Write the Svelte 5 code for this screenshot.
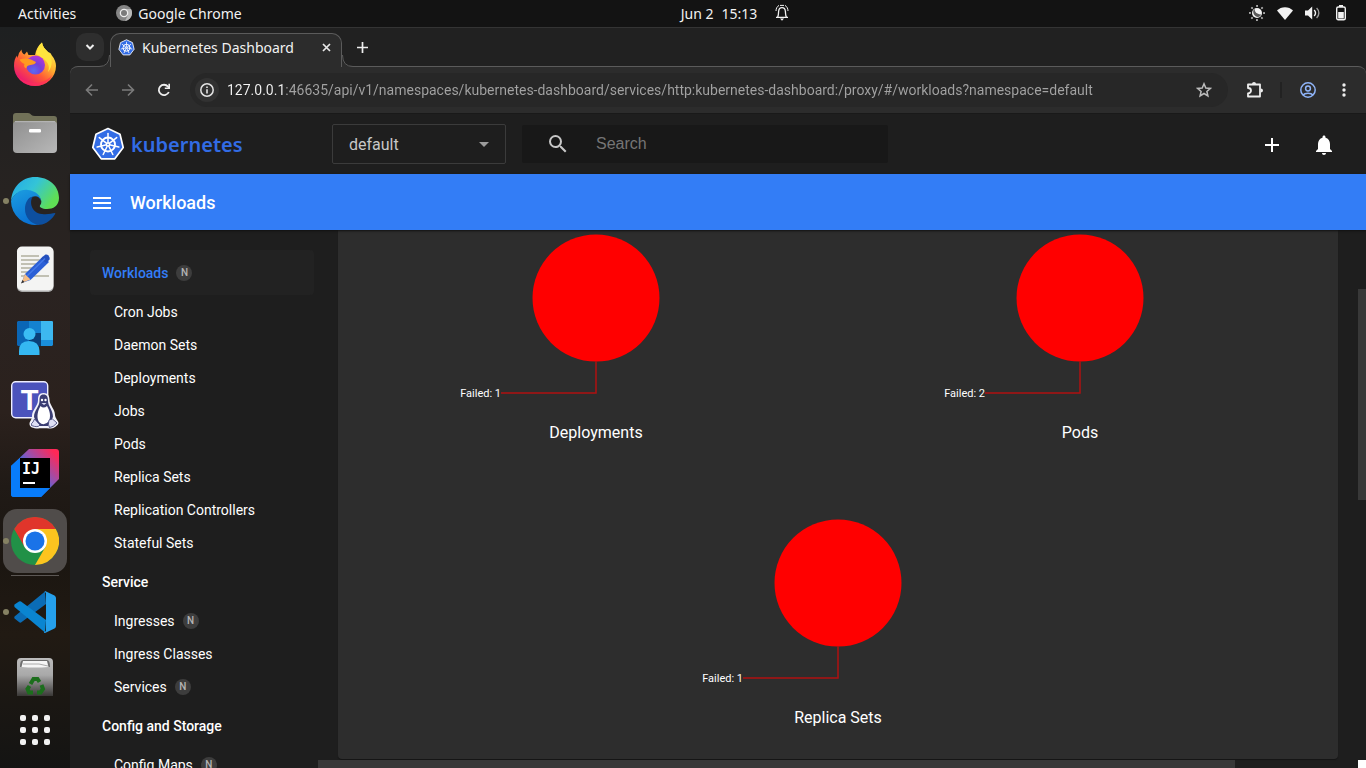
<script>
  const workloads = ['Cron Jobs', 'Daemon Sets', 'Deployments', 'Jobs', 'Pods', 'Replica Sets', 'Replication Controllers', 'Stateful Sets'];
  const sections = [
    { title: 'Workloads', active: true, badge: true, items: workloads.map((name) => ({ name })) },
    { title: 'Service', items: [{ name: 'Ingresses', badge: true }, { name: 'Ingress Classes' }, { name: 'Services', badge: true }] },
    { title: 'Config and Storage', items: [{ name: 'Config Maps', badge: true }] }
  ];
  const charts = [
    { name: 'Deployments', failed: 1 },
    { name: 'Pods', failed: 2 },
    { name: 'Replica Sets', failed: 1 }
  ];
  const spokes = [0, 1, 2, 3, 4, 5, 6].map((i) => (i * 360) / 7);
  const rays = [0, 45, 90, 135, 180, 225, 270, 315];
  const dots = [0, 1, 2, 3, 4, 5, 6, 7, 8];
  let url = $state('127.0.0.1:46635/api/v1/namespaces/kubernetes-dashboard/services/http:kubernetes-dashboard:/proxy/#/workloads?namespace=default');
</script>

{#snippet helm(size)}
  <svg width={size} height={size} viewBox="0 0 34 34" aria-hidden="true">
    <path d="M17 1.5 29 7.2 32.2 20.5 23.8 31.8H10.2L1.8 20.5 5 7.2Z" fill="#326ce5" stroke="#fff" stroke-width="1.7" stroke-linejoin="round" />
    <g fill="none" stroke="#fff" stroke-linecap="round">
      <circle cx="17" cy="17.5" r="7" stroke-width="1.9" />
      {#each spokes as a}
        <path d="M17 15V6.400" stroke-width="1.500" transform="rotate({a} 17 17.5)" />
      {/each}
    </g>
    <circle cx="17" cy="17.5" r="2.400" fill="#fff" />
    <circle cx="17" cy="17.5" r="0.8" fill="#326ce5" />
  </svg>
{/snippet}

<div class="desktop">
  <header class="topbar">
    <div class="top-left">
      <button class="plain">Activities</button>
      <button class="plain app">
        <svg width="16" height="16" viewBox="0 0 16 16" aria-hidden="true">
          <circle cx="8" cy="8" r="8" fill="#858585" />
          <path d="M8 4H15A8 8 0 0 1 9 15.9L12 10Z" fill="#b8b8b8" />
          <circle cx="8" cy="8" r="4.3" fill="#eee" />
          <circle cx="8" cy="8" r="3" fill="#7b7b7b" />
        </svg>
        Google Chrome
      </button>
    </div>
    <button class="plain clock">
      <span>Jun 2</span><span>15:13</span>
      <svg width="14" height="18" viewBox="0 0 14 18" aria-hidden="true" fill="none" stroke="#f2f2f2" stroke-width="1.3">
        <path d="M1 13.4H13M2.6 13C3.6 11.5 3.4 9.5 3.6 7.5 3.8 5 5 3.6 7 3.6S10.2 5 10.4 7.5C10.6 9.5 10.4 11.5 11.4 13" />
        <path d="M1 7C1 4.5 2 2.6 4 1.4M13 7C13 4.5 12 2.6 10 1.4M5 1.4H9" stroke-width="1" />
        <path d="M5 14.5H9L7 16.8Z" fill="#f2f2f2" stroke="none" />
      </svg>
    </button>
    <div class="tray">
      <svg width="16" height="16" viewBox="0 0 16 16" aria-hidden="true">
        <g fill="#b9b9b9">
          {#each rays as r}<rect x="7.2" y="0" width="1.7" height="1.9" transform="rotate({r} 8 8)" />{/each}
        </g>
        <circle cx="8" cy="8" r="5" fill="#f2f2f2" />
        <path d="M5.8 3.6C5.200 7 8 9.600 12.200 9.400 11.500 11 10.500 11.800 9 12 5.500 11.500 3.800 8.500 4.300 5.400Z" fill="#5a5a5a" />
      </svg>
      <svg width="16" height="13" viewBox="0 0 16 13" aria-hidden="true"><path d="M8 13 0 3.6C4-1 12-1 16 3.6Z" fill="#f2f2f2" /></svg>
      <svg width="16" height="14" viewBox="0 0 16 14" aria-hidden="true">
        <path d="M0 4.5H3L7.2 0.5V13.5L3 9.5H0Z" fill="#f2f2f2" />
        <path d="M9.2 4C10.8 5.8 10.8 8.2 9.2 10" fill="none" stroke="#f2f2f2" stroke-width="1.4" />
        <path d="M11.6 2C14.6 4.8 14.6 9.2 11.6 12" fill="none" stroke="#999" stroke-width="1.4" />
      </svg>
      <svg class="battery" width="10" height="16" viewBox="0 0 10 16" aria-hidden="true">
        <rect x="0.7" y="2" width="8.6" height="12.8" rx="1.5" fill="none" stroke="#f2f2f2" stroke-width="1.4" />
        <path d="M3 0H7V2H3ZM2.2 7H7.8V13.4H2.2Z" fill="#f2f2f2" />
      </svg>
    </div>
  </header>

  <div class="workspace">
    <nav class="dock" aria-label="Dock">
      <button class="launcher" aria-label="Firefox">
        <svg width="48" height="48" viewBox="0 0 48 48">
          <defs>
            <linearGradient id="ff1" x1="0.85" y1="0.1" x2="0.2" y2="0.95"><stop offset="0" stop-color="#fff44f" /><stop offset="0.35" stop-color="#ffb02e" /><stop offset="0.62" stop-color="#ff5a36" /><stop offset="1" stop-color="#e8107a" /></linearGradient>
            <radialGradient id="ff2" cx="0.4" cy="0.8" r="0.8"><stop offset="0" stop-color="#5a6cf0" /><stop offset="0.5" stop-color="#7540d8" /><stop offset="1" stop-color="#b535d8" /></radialGradient>
          </defs>
          <path d="M10.5 8.5C10.5 11 11.5 12.5 13.5 13.5L16 10.5 17.5 14H24C25 9 27 4.5 31 1.5 31.5 5.5 34 8 37 11 38.5 11.5 40 12 40.5 14 44 18 45 22 45 25A21 20 0 1 1 3 25C3 20 4 17 6 14.5L6.5 17 8 12Z" fill="url(#ff1)" />
          <path d="M31 1.5C31.5 5.5 34 8 37 11 42 17 42 25 37 31 41 22 32 17 25 13 26 8 28 4 31 1.5Z" fill="#ffe43d" />
          <circle cx="24.5" cy="24" r="9.5" fill="url(#ff2)" />
          <path d="M8.5 18.5C12 17.5 16 17 20 18.5L25 21C24 24 20 23.5 17.500 24.500 16 25 15.500 26 15.500 27.500 12.500 26.500 13 24 13.500 23 11.500 22 9.500 20.500 8.500 18.500Z" fill="#ff9a1f" />
          <path d="M6 34C13 44 33 45 41 34 36 49 12 48 6 34Z" fill="#ff2d5c" opacity=".65" />
        </svg>
      </button>
      <button class="launcher" aria-label="Files">
        <svg width="48" height="48" viewBox="0 0 48 48">
          <defs><linearGradient id="fl" x1="0" y1="0" x2="1" y2="1"><stop offset="0" stop-color="#8f8f8f" /><stop offset="1" stop-color="#b8b8b8" /></linearGradient></defs>
          <path d="M2 7Q2 4 5 4H17Q19 4 20.5 6 21.5 7 24 7H43Q46 7 46 10V30H2Z" fill="#717158" />
          <rect x="2" y="12" width="44" height="32" rx="4" fill="url(#fl)" />
          <path d="M4 12.7H44" stroke="#b9b9b9" stroke-width="1" />
          <rect x="18" y="20" width="12" height="3.5" rx="1.3" fill="#fff" />
        </svg>
      </button>
      <button class="launcher running" aria-label="Microsoft Edge">
        <svg width="48" height="48" viewBox="0 0 48 48">
          <defs>
            <linearGradient id="ed1" x1="0" y1="0" x2="1" y2="0.5"><stop offset="0" stop-color="#22a7e8" /><stop offset="0.5" stop-color="#34c4d7" /><stop offset="1" stop-color="#5fdf55" /></linearGradient>
            <linearGradient id="ed2" x1="0" y1="0" x2="0.4" y2="1"><stop offset="0" stop-color="#1c9ee0" /><stop offset="1" stop-color="#0a72d4" /></linearGradient>
          </defs>
          <path d="M0 24C1 10 11 0 24 0 38 0 48 9 48 21 48 29 42 32 36 32 31 32 28 30 29 28.500 33 24 28 17 20 15 10 12 3 17 0 24Z" fill="url(#ed1)" />
          <path d="M0 24C3 17 9 12 17 13 25 14 30 19 30 24 29 20 25 18 21 20 13 24 13 36 28 47.600A24 24 0 0 1 0 24Z" fill="url(#ed2)" />
          <path d="M14 32C14 26 17 20 22 19.500 18 24 20 36 31 37 37 38 41 36 44 36Q45 36 43.500 38C39 45 32 48 27 48 19 46 14 40 14 32Z" fill="#0d4f9f" />
        </svg>
      </button>
      <button class="launcher" aria-label="Text Editor">
        <svg width="48" height="48" viewBox="0 0 48 48">
          <rect x="6" y="2" width="36.500" height="45" rx="5" fill="#aaa" />
          <rect x="6" y="1.500" width="36.500" height="44" rx="5" fill="#f4f4f3" />
          <path d="M10 11H28M10 15H30M10 19H27M10 23H24M10 27H20M10 31H38" stroke="#c1c0b3" stroke-width="2" />
          <path d="M10.500 38 14 29 32 11.500 38 17 19.500 35Z" fill="#2b5fd6" />
          <path d="M32 11.500 34.500 9.500Q36 9 37.500 10.500 39 12.500 38.500 14.500L35.500 18 29.500 14Z" fill="#2450bd" />
          <path d="M10.500 38 14 29 19.500 34.500Z" fill="#f4bd86" /><path d="M10 38.500 11.500 35 13.500 37Z" fill="#333" />
          <path d="M16 31 34 13.500" stroke="#4479e8" stroke-width="1.500" />
        </svg>
      </button>
      <button class="launcher" aria-label="Remote Contacts">
        <svg width="48" height="48" viewBox="0 0 48 48">
          <path d="M7 8H18V33H7L6 32V9Z" fill="#0a66b5" /><path d="M18 8H30V20H18Z" fill="#1482d0" /><path d="M18 20H30V33H18Z" fill="#0a4078" />
          <path d="M30 8H41L42 9V32L41 33H30Z" fill="#1a8fdc" /><path d="M30 8H41L42 9V27H30Z" fill="#3db8f0" />
          <circle cx="18.500" cy="21" r="6" fill="#3bbdf3" />
          <path d="M8 42V38Q8 28 18 28T28.500 38V42Z" fill="#35b8f2" />
        </svg>
      </button>
      <button class="launcher" aria-label="Teams for Linux">
        <svg width="48" height="48" viewBox="0 0 48 48">
          <rect x="0.700" y="0.700" width="36" height="36" rx="4" fill="#4b53bc" stroke="#eef" stroke-width="1.400" />
          <text x="18.500" y="29" text-anchor="middle" font-family="Liberation Sans" font-size="29" font-weight="700" fill="#fff">T</text>
          <path d="M32.500 12C37 12 38.500 15 38.500 19 38.500 24 44 28 44 34 44 37 47.500 40 47.500 42 47.500 44 43 47.500 40 47.500 37 47.500 30 47 27 47.500 22 47.500 18.500 46 18.500 43 18.500 40 21 39 21 35 21 29 27 25 27 19 27 15 28 12 32.500 12Z" fill="#f2f2fa" />
          <path d="M32.500 13.500C36 13.500 37 16 37 20 37 25 42 29 42 36L37 45H27L23 36C23 29 28.500 26 28.500 20 28.500 16 29 13.500 32.500 13.500Z" fill="#3a3d73" />
          <path d="M29.500 25Q32.500 28 36 25C39 30 40 35 38 40Q33 46 28 41C25 36 27 29 29.500 25Z" fill="#fff" />
          <circle cx="31" cy="19" r="1.200" fill="#fff" /><circle cx="34.500" cy="19" r="1.200" fill="#fff" />
          <path d="M30.500 22H35.500L33 24Z" fill="#dcdcf4" />
          <path d="M23.500 38 29 44Q27 47 20.500 44.500 20 42 22 41ZM41.500 38 46 42Q42 46.500 38.500 46.500 36.500 44 38 39Z" fill="#dfe0f5" stroke="#3a3d73" stroke-width="0.800" />
        </svg>
      </button>
      <button class="launcher" aria-label="IntelliJ IDEA">
        <svg width="48" height="48" viewBox="0 0 48 48">
          <defs><linearGradient id="ij" x1="1" y1="0" x2="0.150" y2="0.800"><stop offset="0.100" stop-color="#ff2857" /><stop offset="0.500" stop-color="#8b55b8" /><stop offset="0.750" stop-color="#087cfa" /></linearGradient></defs>
          <path d="M18 0H45Q48 0 48 3V30L30 48H3Q0 48 0 45V17Z" fill="url(#ij)" />
          <path d="M0 17 9 9V39H39L30 48H3Q0 48 0 45Z" fill="#087cfa" />
          <rect x="9" y="9" width="30" height="30" fill="#000" />
          <text x="11" y="24.500" font-family="DejaVu Sans Mono" font-size="15" font-weight="700" fill="#fff">IJ</text>
          <rect x="12" y="33" width="12" height="2" fill="#fff" />
        </svg>
      </button>
      <button class="launcher running current" aria-label="Google Chrome">
        <svg width="48" height="48" viewBox="0 0 48 48">
          <circle cx="24" cy="24" r="24" fill="#219147" />
          <path d="M3.200 12A24 24 0 0 1 44.800 12H24L13.600 30Z" fill="#e0352b" />
          <path d="M24 12H44.800A24 24 0 0 1 24 48L34.400 30Z" fill="#fcc41f" />
          <circle cx="24" cy="24" r="12" fill="#fff" /><circle cx="24" cy="24" r="9.500" fill="#1a73e8" />
        </svg>
      </button>
      <hr />
      <button class="launcher running" aria-label="Visual Studio Code">
        <svg width="48" height="48" viewBox="0 0 48 48">
          <path d="M34 3.500 35 16 10 34.500Q9 35 8 34L3.500 30.500Q3 29.500 3.500 28.500Z" fill="#0b6cb5" />
          <path d="M3.500 16.500 8 13.500Q9 13 10 13.500L35 32 34 44.500 3.500 19Q3 17.500 3.500 16.500Z" fill="#0a85d1" />
          <path d="M34 3 43.500 7.500Q45 8.500 45 10V38Q45 39.500 43.500 40.500L34 45Q31.500 45 35 43V5Q33 3 34 3Z" fill="#25a0ec" />
        </svg>
      </button>
      <button class="launcher" aria-label="Trash">
        <svg width="48" height="48" viewBox="0 0 48 48">
          <defs><linearGradient id="tr" x1="0" y1="0" x2="0" y2="1"><stop offset="0" stop-color="#bcbcbc" /><stop offset="0.450" stop-color="#a9a9a9" /><stop offset="1" stop-color="#3a3836" /></linearGradient></defs>
          <path d="M6 6Q6 2 10 2H38Q42 2 42 6V40H6Z" fill="url(#tr)" />
          <path d="M9 11Q9 4 12 4H36Q39 4 39 11Z" fill="#6d6d6d" />
          <path d="M12 5H36L37.500 11Q24 12 10.500 11Z" fill="#f5f5f5" /><path d="M12 8H28L37 10" stroke="#aaa" fill="none" />
          <g fill="none" stroke="#1c6e1c" stroke-width="4">
            <path d="M19.500 28 22.500 23H26.500L28.500 26" /><path d="M30.500 29 32 33 29.500 36.500H26" /><path d="M22 36.500H18L16.500 33 18.500 30" />
          </g>
        </svg>
      </button>
      <button class="apps" aria-label="Show Applications">
        {#each dots as d (d)}<span></span>{/each}
      </button>
    </nav>

    <div class="browser">
      <div class="tabstrip">
        <button class="tabsearch" aria-label="Search tabs">
          <svg width="10" height="8" viewBox="0 0 10 8"><path d="M1.500 2 5 5.500 8.500 2" fill="none" stroke="#eee" stroke-width="2" /></svg>
        </button>
        <svg class="foot" width="11" height="12" viewBox="0 0 11 12" aria-hidden="true"><path d="M0 11.500Q11.500 11.500 11.500 0V12H0Z" fill="#2c2c2c" /><path d="M0 11.500Q10.500 11.500 10.500 0" fill="none" stroke="#5b5b5b" /></svg>
        <div class="tab">
          {@render helm(17)}
          <span>Kubernetes Dashboard</span>
          <button class="close" aria-label="Close tab">
            <svg width="9" height="9" viewBox="0 0 9 9"><path d="M1 1 8 8M8 1 1 8" stroke="#e8e8e8" stroke-width="1.700" /></svg>
          </button>
        </div>
        <svg class="foot" width="11" height="12" viewBox="0 0 11 12" aria-hidden="true"><path d="M11 11.500Q-.5 11.500 -.5 0V12H11Z" fill="#2c2c2c" /><path d="M11 11.500Q.5 11.500 .5 0" fill="none" stroke="#5b5b5b" /></svg>
        <button class="newtab" aria-label="New tab">
          <svg width="11" height="11" viewBox="0 0 11 11"><path d="M5.500 0V11M0 5.500H11" stroke="#eee" stroke-width="1.700" /></svg>
        </button>
      </div>

      <div class="toolbar">
        <button class="tool" aria-label="Back"><svg width="14" height="14" viewBox="0 0 14 14"><path d="M13 7H2M7 1.500 1.500 7 7 12.500" fill="none" stroke="#7b7b7b" stroke-width="1.600" /></svg></button>
        <button class="tool" aria-label="Forward"><svg width="14" height="14" viewBox="0 0 14 14"><path d="M1 7H12M7 1.500 12.500 7 7 12.500" fill="none" stroke="#7b7b7b" stroke-width="1.600" /></svg></button>
        <button class="tool" aria-label="Reload"><svg width="14" height="14" viewBox="0 0 14 14"><path d="M11.800 9A5.200 5.200 0 1 1 11 3.600L12.500 5" fill="none" stroke="#eee" stroke-width="1.800" /><path d="M13 .8V6H7.800V4.400H11.400V.8Z" fill="#eee" /></svg></button>
        <div class="omnibox">
          <button class="info" aria-label="Site information">
            <svg width="14" height="14" viewBox="0 0 14 14"><circle cx="7" cy="7" r="6.200" fill="none" stroke="#e4e4e4" stroke-width="1.500" /><path d="M7 6.200V10.400M7 3.500V5" stroke="#e4e4e4" stroke-width="1.600" /></svg>
          </button>
          <input class="url" aria-label="Address" bind:value={url} />
          <button class="star" aria-label="Bookmark this tab">
            <svg width="16" height="16" viewBox="0 0 16 16"><path d="M8 1.800 9.800 6 14.300 6.400 10.900 9.400 11.900 13.900 8 11.500 4.100 13.900 5.100 9.400 1.700 6.400 6.200 6Z" fill="none" stroke="#bdbdbd" stroke-width="1.500" /></svg>
          </button>
        </div>
        <button class="tool ext" aria-label="Extensions">
          <svg width="18" height="18" viewBox="0 0 18 18"><path d="M2 3.500H14V15.500H2V12.500Q5 12 5 9.500T2 7Z" fill="none" stroke="#eee" stroke-width="1.800" stroke-linejoin="round" /><path d="M6 3Q6 1 8 1T10 3ZM14.800 7.500Q17 7.500 17 9.500T14.800 11.500Z" fill="#eee" /></svg>
        </button>
        <span class="divider"></span>
        <button class="tool user" aria-label="Profile">
          <svg width="16" height="16" viewBox="0 0 16 16" fill="none" stroke="#8fb4f8" stroke-width="1.500"><circle cx="8" cy="8" r="7.200" /><circle cx="8" cy="6.500" r="2.400" /><path d="M3 13C5 10.500 11 10.500 13 13" /></svg>
        </button>
        <button class="tool more" aria-label="Menu">
          <svg width="4" height="14" viewBox="0 0 4 14" fill="#eee"><circle cx="2" cy="2" r="1.700" /><circle cx="2" cy="7" r="1.700" /><circle cx="2" cy="12" r="1.700" /></svg>
        </button>
      </div>

      <div class="page">
        <header class="kd-header">
          <a class="brand" href="#/workloads">{@render helm(34)}<span>kubernetes</span></a>
          <div class="ns">
            <select aria-label="Namespace"><option>default</option></select>
            <svg width="10" height="5" viewBox="0 0 10 5" aria-hidden="true"><path d="M0 0H10L5 5Z" fill="#9c9c9c" /></svg>
          </div>
          <label class="search">
            <svg width="24" height="24" viewBox="0 0 24 24" aria-hidden="true"><path fill="#c7c7c7" d="M15.500 14h-.79l-.28-.27A6.471 6.471 0 0 0 16 9.500 6.500 6.500 0 1 0 9.500 16c1.610 0 3.090-.59 4.230-1.570l.27.28v.79l5 4.990L20.490 19l-4.990-5zm-6 0C7.010 14 5 11.990 5 9.500S7.010 5 9.500 5 14 7.010 14 9.500 11.990 14 9.500 14z" /></svg>
            <input type="text" placeholder="Search" aria-label="Search" />
          </label>
          <div class="actions">
            <button class="icon" aria-label="Create new resource"><svg width="24" height="24" viewBox="0 0 24 24"><path fill="#fff" d="M19 13h-6v6h-2v-6H5v-2h6V5h2v6h6v2z" /></svg></button>
            <button class="icon" aria-label="Notifications"><svg width="24" height="24" viewBox="0 0 24 24"><path fill="#fff" d="M12 22c1.100 0 2-.9 2-2h-4c0 1.100.89 2 2 2zm6-6v-5c0-3.070-1.640-5.640-4.500-6.320V4c0-.83-.67-1.500-1.500-1.500s-1.500.67-1.500 1.500v.68C7.630 5.360 6 7.920 6 11v5l-2 2v1h16v-1l-2-2z" /></svg></button>
          </div>
        </header>
        <div class="kd-bar">
          <button class="icon" aria-label="Toggle navigation"><svg width="24" height="24" viewBox="0 0 24 24"><path fill="#fff" d="M3 18h18v-2H3v2zm0-5h18v-2H3v2zm0-7v2h18V6H3z" /></svg></button>
          <h1>Workloads</h1>
        </div>
        <div class="kd-body">
          <nav class="side" aria-label="Resources">
            {#each sections as s}
              <a class="group" class:active={s.active} href="#/{s.title}">{s.title}{#if s.badge}<span class="badge">N</span>{/if}</a>
              {#each s.items as item}
                <a class="item" href="#/{item.name}">{item.name}{#if item.badge}<span class="badge">N</span>{/if}</a>
              {/each}
            {/each}
          </nav>
          <div class="content">
            <div class="middle">
              <main class="card">
                {#each charts as c}
                  <figure>
                    <svg width="300" height="176" viewBox="0 0 300 176" role="img" aria-label="{c.name} status">
                      <circle cx="150" cy="68" r="63.500" fill="#f00" />
                      <path d="M150 131V163H55" fill="none" stroke="#b01010" stroke-width="1.500" />
                      <text x="55" y="167" text-anchor="end">Failed: {c.failed}</text>
                    </svg>
                    <figcaption>{c.name}</figcaption>
                  </figure>
                {/each}
              </main>
              <div class="vscroll"><span></span></div>
            </div>
            <div class="hscroll"><span></span><i></i></div>
          </div>
        </div>
      </div>
    </div>
  </div>
</div>

<style>
  :global(body) { margin: 0; background: #1e1e1e; }
  button { margin: 0; padding: 0; border: 0; background: none; color: inherit; font: inherit; display: flex; align-items: center; justify-content: center; }
  svg { display: block; flex: none; }
  a { text-decoration: none; color: inherit; }
  .desktop { height: 100vh; display: flex; flex-direction: column; overflow: hidden; font-family: "Noto Sans", sans-serif; font-size: 14px; color: #f2f2f2; }

  .topbar { flex: none; height: 27px; box-sizing: border-box; background: #131313; display: grid; grid-template-columns: 1fr auto 1fr; align-items: center; padding: 0 20px 1px 18px; }
  .top-left { display: flex; gap: 40px; }
  .app { gap: 6px; }
  .clock { gap: 8px; padding-left: 106px; }
  .clock svg { margin-left: 10px; }
  .tray { display: flex; justify-content: flex-end; align-items: center; gap: 12px; }
  .battery { margin-left: 3px; }

  .workspace { flex: 1; min-height: 0; display: flex; }
  .dock { flex: none; width: 70px; box-sizing: border-box; padding-top: 6px; display: flex; flex-direction: column; align-items: center; gap: 4px; overflow: hidden;
    background: linear-gradient(#1e2021 0, #272321 22%, #2a2321 35%, #2b211d 52%, #201a16 62%, #1b1611 72%, #211a13 82%, #141413 100%); }
  .launcher { flex: none; width: 64px; height: 64px; border-radius: 14px; position: relative; }
  .current { background: #504c4a; }
  .running::before { content: ""; position: absolute; left: 0; top: 29px; width: 6px; height: 6px; border-radius: 3px; background: #858163; }
  hr { flex: none; width: 48px; height: 1px; border: 0; margin: -2px 0 0; background: #5b5754; }
  .apps { flex: none; display: grid; grid-template-columns: repeat(3, 6px); gap: 6px; margin-top: -1px; }
  .apps span { width: 6px; height: 6px; border-radius: 2px; background: #f2f2f2; }

  .browser { flex: 1; min-width: 0; display: flex; flex-direction: column; background: #212121; }
  .tabstrip { flex: none; height: 39px; box-sizing: border-box; border-top: 1px solid #343434; display: flex; align-items: flex-end; padding-left: 6px; }
  .tabsearch { width: 28px; height: 28px; border-radius: 10px; background: #2e2e2e; align-self: flex-start; margin-top: 5px; margin-right: -5px; }
  .foot { position: relative; z-index: 1; margin-bottom: -1px; }
  .tab { position: relative; z-index: 1; width: 232px; height: 34px; box-sizing: border-box; margin-bottom: -1px; border: 1px solid #5b5b5b; border-bottom: 0; border-radius: 10px 10px 0 0; background: #2c2c2c; display: flex; align-items: center; padding: 0 6px 7px 7px; gap: 7px; white-space: nowrap; }
  .close { width: 18px; height: 18px; margin-left: auto; }
  .newtab { width: 18px; height: 28px; margin-bottom: 5px; }

  .toolbar { flex: none; height: 47px; box-sizing: border-box; border-top: 1px solid #5b5b5b; border-radius: 8px 8px 0 0; background: #2c2c2c; display: flex; align-items: center; padding: 0 14px 0 11px; }
  .tool { width: 22px; height: 34px; margin-right: 14px; }
  .omnibox { flex: 1; height: 34px; border-radius: 17px; background: #272727; display: flex; align-items: center; padding: 0 16px 0 5px; margin-left: 1px; }
  .info { width: 24px; height: 24px; border-radius: 12px; background: #323232; flex: none; }
  .url { flex: 1; min-width: 0; margin-left: 8px; padding: 0; border: 0; outline: 0; font: 14px Roboto, sans-serif; line-height: 20px; color: transparent; background: linear-gradient(90deg, #f4f4f4 58px, #a3a3a3 58px); background-clip: text; -webkit-background-clip: text; }
  .ext { margin: 0 0 0 16px; }
  .divider { width: 2px; height: 16px; margin: 0 16px 0 14px; background: #222; }
  .user { width: 20px; margin-right: 18px; }
  .more { width: 16px; margin: 0; }

  .page { flex: 1; min-height: 0; display: flex; flex-direction: column; background: #1e1e1e; font-family: Roboto, sans-serif; color: #fff; }
  .kd-header { flex: none; height: 61px; box-sizing: border-box; border-top: 1px solid #191919; display: flex; align-items: center; padding: 0 30px 0 21px; }
  .brand { width: 241px; display: flex; align-items: center; gap: 6px; color: #326ce5; font: 600 20px "Noto Sans", sans-serif; }
  .ns { position: relative; width: 174px; height: 40px; display: flex; align-items: center; }
  .ns select { appearance: none; width: 100%; height: 40px; border: 1px solid #3b3b3b; border-radius: 2px; background: #1e1e1e; color: #c7c7c7; font: 400 16px Roboto, sans-serif; padding: 0 16px; }
  .ns svg { position: absolute; right: 17px; pointer-events: none; }
  .search { width: 366px; height: 38px; box-sizing: border-box; margin-left: 16px; padding: 0 16px 0 24px; border-radius: 2px; background: #181818; display: flex; align-items: center; gap: 26px; }
  .search input { flex: 1; min-width: 0; border: 0; outline: 0; padding: 0; background: none; color: #ccc; font: 16px "Liberation Sans", sans-serif; }
  .search input::placeholder { color: #757575; }
  .actions { margin-left: auto; padding-top: 2px; display: flex; gap: 28px; }
  .icon { width: 24px; height: 24px; }
  .kd-bar { flex: none; height: 56px; box-sizing: border-box; position: relative; z-index: 1; background: #337df6; box-shadow: 0 1px 2px #111; display: flex; align-items: center; gap: 16px; padding: 2px 20px 0; }
  h1 { margin: 0; font-size: 18px; line-height: 24px; font-weight: 500; }
  .kd-body { flex: 1; min-height: 0; display: flex; }
  .side { flex: none; width: 248px; box-sizing: border-box; padding: 20px 4px 0 20px; overflow: hidden; font-size: 14px; }
  .group, .item { display: flex; align-items: center; }
  .group { height: 45px; padding-left: 12px; font-weight: 500; }
  .item { height: 33px; padding-left: 24px; }
  .active { color: #337df6; background: #222; border-radius: 4px; }
  .badge { width: 16px; height: 16px; margin-left: 8px; border-radius: 8px; background: #3d3d3d; color: #b5b5b5; font-size: 10px; line-height: 16px; font-weight: 500; text-align: center; }
  .content { flex: 1; min-width: 0; display: flex; flex-direction: column; }
  .middle { flex: 1; min-height: 0; display: flex; }
  .card { flex: 1; margin: 0 20px 1px; padding: 0 16px; border-radius: 0 0 4px 4px; background: #2d2d2d; box-shadow: 0 1px 1px #151515; display: flex; flex-wrap: wrap; align-content: flex-start; justify-content: center; overflow: hidden; }
  figure { margin: 0; width: 50%; height: 285px; display: flex; flex-direction: column; align-items: center; gap: 15px; }
  figure text { font: 11px Roboto, sans-serif; fill: #fff; }
  figcaption { font-size: 16px; line-height: 24px; }
  .vscroll { flex: none; width: 8px; padding-top: 59px; }
  .vscroll span { display: block; height: 211px; background: #383838; }
  .hscroll { flex: none; height: 8px; display: grid; grid-template-columns: 7fr 1fr; }
  .hscroll span { background: #383838; }
  .hscroll i { width: 8px; justify-self: end; background: #fff; }
</style>
